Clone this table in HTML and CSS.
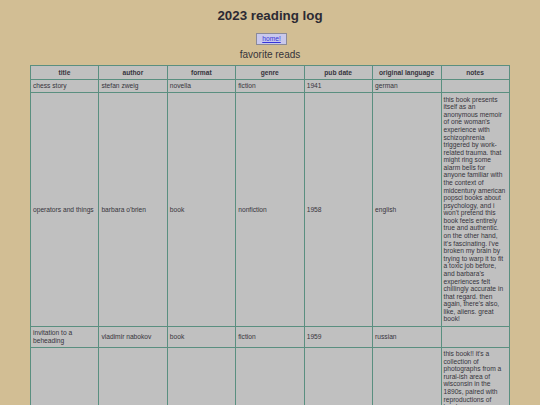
FILE: index.html
```html
<!DOCTYPE html>
<html>
<head>
<meta charset="utf-8">
<title>2023 reading log</title>
<link rel="stylesheet" href="styles.css">
</head>
<body>
<h1 class="title">2023 reading log</h1>
<div class="nav"><button class="home-btn"><a href="#">home!</a></button></div>
<h2 class="subtitle">favorite reads</h2>
<table class="log">
  <colgroup><col><col><col><col><col><col><col></colgroup>
  <thead>
    <tr><th>title</th><th>author</th><th>format</th><th>genre</th><th>pub date</th><th>original language</th><th>notes</th></tr>
  </thead>
  <tbody>
    <tr><td>chess story</td><td>stefan zweig</td><td>novella</td><td>fiction</td><td>1941</td><td>german</td><td></td></tr>
    <tr><td>operators and things</td><td>barbara o'brien</td><td>book</td><td>nonfiction</td><td>1958</td><td>english</td><td>this book presents itself as an anonymous memoir of one woman's experience with schizophrenia triggered by work-related trauma. that might ring some alarm bells for anyone familiar with the context of midcentury american popsci books about psychology, and i won't pretend this book feels entirely true and authentic. on the other hand, it's fascinating. i've broken my brain by trying to warp it to fit a toxic job before, and barbara's experiences felt chillingly accurate in that regard. then again, there's also, like, aliens. great book!</td></tr>
    <tr><td>invitation to a beheading</td><td>vladimir nabokov</td><td>book</td><td>fiction</td><td>1959</td><td>russian</td><td></td></tr>
    <tr><td>wisconsin death trip</td><td>michael lesy</td><td>book</td><td>nonfiction</td><td>1973</td><td>english</td><td>this book!! it's a collection of photographs from a rural-ish area of wisconsin in the 1890s, paired with reproductions of local newspaper clippings from the same years. murders, madness, fires, epidemics, arson, strange little tragedies one after another, all reported in the same flat small-town voice. the photos are portraits of ordinary people, babies in coffins, farms and horses and main streets. it's bleak and eerie and weirdly beautiful, and it has stuck with me ever since i first read it. highly recommended if you like your history strange.</td></tr>
  </tbody>
</table>
</body>
</html>
```
FILE: styles.css
```css
html, body {
  margin: 0;
  padding: 0;
}
body {
  background: #d2be94;
  font-family: "Liberation Sans", Arial, sans-serif;
  color: #35333a;
  font-size: 6.67px;
}
.title {
  font-size: 13.33px;
  font-weight: bold;
  text-align: center;
  margin: 8px 0 0;
  line-height: 15.5px;
  color: #2c2a33;
}
.nav {
  text-align: center;
  margin-top: 9.5px;
  height: 12px;
}
.home-btn {
  font-family: "Liberation Sans", Arial, sans-serif;
  font-size: 6.67px;
  height: 12px;
  padding: 0 5px;
  margin: 0 0 0 3px;
  background: #c9c8ec;
  border: 1px solid #8a8a9a;
  border-radius: 0;
  line-height: 8px;
  vertical-align: top;
}
.home-btn a {
  color: #3434d8;
  text-decoration: underline;
}
.subtitle {
  font-size: 10px;
  font-weight: normal;
  text-align: center;
  margin: 3.5px 0 0;
  line-height: 11.5px;
  color: #35333a;
}
.log {
  width: 480px;
  margin: 5px auto 0;
  border-collapse: collapse;
  table-layout: fixed;
  border: 1.5px solid #5a8f80;
}
.log th,
.log td {
  border: 1.5px solid #5a8f80;
  background: #c0c0c0;
  padding: 2.5px 2.5px 2.5px 2px;
  font-size: 6.67px;
  line-height: 7.58px;
  vertical-align: middle;
  text-align: left;
  color: #36343c;
}
.log th {
  font-weight: bold;
  text-align: center;
}
```
